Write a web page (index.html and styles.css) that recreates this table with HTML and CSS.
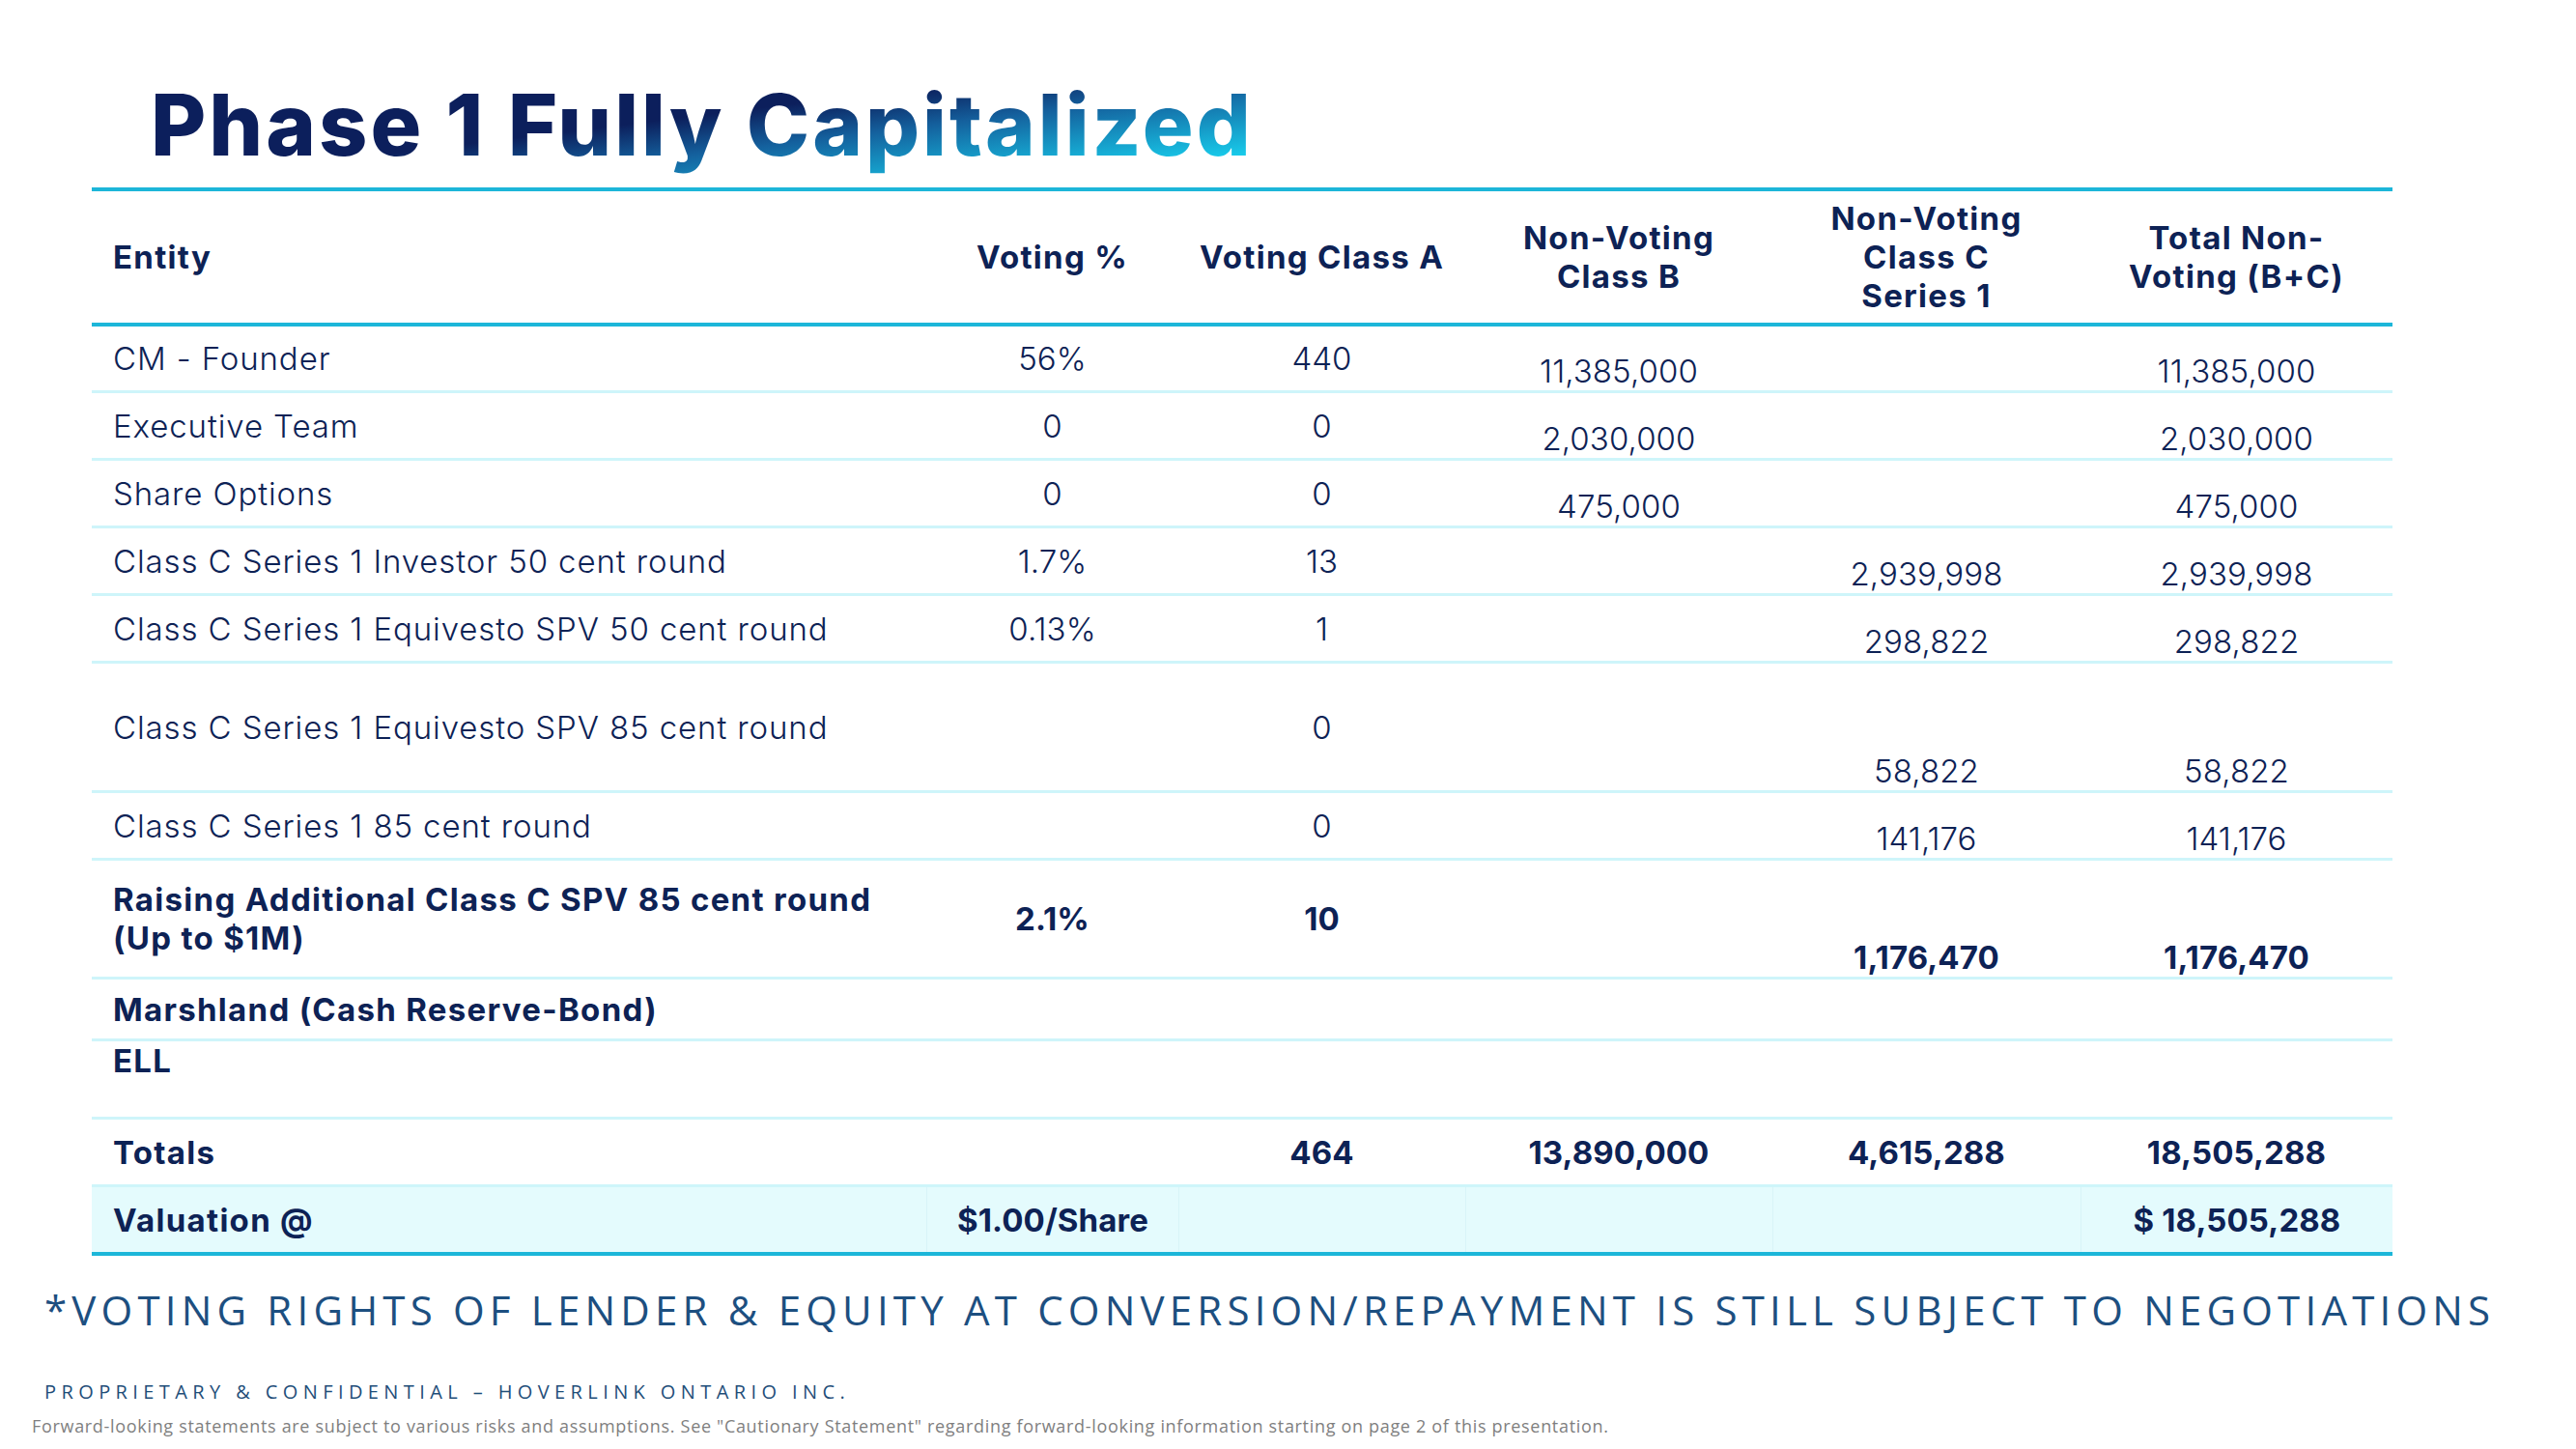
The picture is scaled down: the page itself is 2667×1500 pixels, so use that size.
FILE: index.html
```html
<!DOCTYPE html>
<html lang="en">
<head>
<meta charset="utf-8">
<title>Phase 1 Fully Capitalized</title>
<link rel="stylesheet" href="styles.css">
</head>
<body>
<div class="slide">
  <header class="top">
    <h1 class="title">Phase 1 Fully Capitalized</h1>
  </header>

  <div class="cap">
    <div class="row head">
      <div class="c ent">Entity</div>
      <div class="c">Voting %</div>
      <div class="c">Voting Class A</div>
      <div class="c">Non-Voting<br>Class B</div>
      <div class="c">Non-Voting<br>Class C<br>Series 1</div>
      <div class="c">Total Non-<br>Voting (B+C)</div>
    </div>

    <div class="row r69">
      <div class="c ent">CM - Founder</div>
      <div class="c n">56%</div>
      <div class="c n">440</div>
      <div class="c n b">11,385,000</div>
      <div class="c n b"></div>
      <div class="c n b">11,385,000</div>
    </div>
    <div class="row r70">
      <div class="c ent">Executive Team</div>
      <div class="c n">0</div>
      <div class="c n">0</div>
      <div class="c n b">2,030,000</div>
      <div class="c n b"></div>
      <div class="c n b">2,030,000</div>
    </div>
    <div class="row r70">
      <div class="c ent">Share Options</div>
      <div class="c n">0</div>
      <div class="c n">0</div>
      <div class="c n b">475,000</div>
      <div class="c n b"></div>
      <div class="c n b">475,000</div>
    </div>
    <div class="row r70">
      <div class="c ent">Class C Series 1 Investor 50 cent round</div>
      <div class="c n">1.7%</div>
      <div class="c n">13</div>
      <div class="c n b"></div>
      <div class="c n b">2,939,998</div>
      <div class="c n b">2,939,998</div>
    </div>
    <div class="row r70">
      <div class="c ent">Class C Series 1 Equivesto SPV 50 cent round</div>
      <div class="c n">0.13%</div>
      <div class="c n">1</div>
      <div class="c n b"></div>
      <div class="c n b">298,822</div>
      <div class="c n b">298,822</div>
    </div>
    <div class="row r134">
      <div class="c ent">Class C Series 1 Equivesto SPV 85 cent round</div>
      <div class="c n"></div>
      <div class="c n">0</div>
      <div class="c n b"></div>
      <div class="c n b">58,822</div>
      <div class="c n b">58,822</div>
    </div>
    <div class="row r70">
      <div class="c ent">Class C Series 1 85 cent round</div>
      <div class="c n"></div>
      <div class="c n">0</div>
      <div class="c n b"></div>
      <div class="c n b">141,176</div>
      <div class="c n b">141,176</div>
    </div>
    <div class="row r123 bold">
      <div class="c ent">Raising Additional Class C SPV 85 cent round<br>(Up to $1M)</div>
      <div class="c n">2.1%</div>
      <div class="c n">10</div>
      <div class="c n b"></div>
      <div class="c n b">1,176,470</div>
      <div class="c n b">1,176,470</div>
    </div>
    <div class="row r64 bold">
      <div class="c ent">Marshland (Cash Reserve-Bond)</div>
      <div class="c"></div>
      <div class="c"></div>
      <div class="c"></div>
      <div class="c"></div>
      <div class="c"></div>
    </div>
    <div class="row r81 bold">
      <div class="c ent t">ELL</div>
      <div class="c"></div>
      <div class="c"></div>
      <div class="c"></div>
      <div class="c"></div>
      <div class="c"></div>
    </div>
    <div class="row r70 bold">
      <div class="c ent">Totals</div>
      <div class="c n"></div>
      <div class="c n">464</div>
      <div class="c n">13,890,000</div>
      <div class="c n">4,615,288</div>
      <div class="c n">18,505,288</div>
    </div>
    <div class="row val bold">
      <div class="c ent">Valuation @</div>
      <div class="c n">$1.00/Share</div>
      <div class="c n"></div>
      <div class="c n"></div>
      <div class="c n"></div>
      <div class="c n">$ 18,505,288</div>
    </div>
  </div>

  <p class="banner">*VOTING RIGHTS OF LENDER &amp; EQUITY AT CONVERSION/REPAYMENT IS STILL SUBJECT TO NEGOTIATIONS</p>
  <p class="prop">PROPRIETARY &amp; CONFIDENTIAL – HOVERLINK ONTARIO INC.</p>
  <p class="fwd">Forward-looking statements are subject to various risks and assumptions. See "Cautionary Statement" regarding forward-looking information starting on page 2 of this presentation.</p>
</div>
</body>
</html>
```

FILE: styles.css
```css
html, body {
  margin: 0;
  padding: 0;
  background: #ffffff;
}

.slide {
  width: 2667px;
  height: 1500px;
  background: #ffffff;
  overflow: hidden;
  font-family: Inter, "Open Sans", sans-serif;
  color: #0d2255;
}

.top {
  height: 194px;
  box-sizing: border-box;
  padding: 76px 0 0 156px;
}

.title {
  margin: 0;
  width: fit-content;
  font-family: Inter, sans-serif;
  font-weight: 800;
  font-size: 88px;
  line-height: 1.21;
  letter-spacing: 3px;
  color: transparent;
  background: linear-gradient(173deg, #0c1f5c 0%, #0c1f5c 46%, #14609d 62%, #18dbf6 95%);
  -webkit-background-clip: text;
  background-clip: text;
}

.cap {
  margin-left: 95px;
  width: 2382px;
}

.row {
  display: grid;
  grid-template-columns: 864px 261px 297px 318px 319px 323px;
  box-sizing: border-box;
  border-bottom: 3px solid #cef5fa;
  font-size: 33px;
  font-weight: 300;
  line-height: 40px;
  letter-spacing: 0.9px;
}

.row.head {
  height: 144px;
  border-top: 4px solid #1cb6d9;
  border-bottom: 4px solid #1cb6d9;
  font-weight: 700;
  letter-spacing: 1.3px;
}

.r69 { height: 69px; }
.r70 { height: 70px; }
.r134 { height: 134px; }
.r123 { height: 123px; }
.r64 { height: 64px; }
.r81 { height: 81px; }

.row.bold {
  font-weight: 700;
  letter-spacing: 1.3px;
}

.row.val {
  height: 71px;
  background: #e4fbfd;
  border-bottom: 4px solid #1cb6d9;
}

.row.val .c + .c {
  border-left: 1px solid #d8f4f8;
}

.c {
  display: flex;
  align-items: center;
  justify-content: center;
  text-align: center;
  white-space: nowrap;
}

.c.n {
  letter-spacing: 0.1px;
}

.c.ent {
  justify-content: flex-start;
  text-align: left;
  padding-left: 22px;
}

.c.b {
  align-items: flex-end;
}

.c.t {
  align-items: flex-start;
}

.banner {
  margin: 27px 0 0 46px;
  font-family: "Open Sans", sans-serif;
  font-size: 42px;
  font-weight: 500;
  line-height: normal;
  letter-spacing: 5.2px;
  color: #1d4f80;
  white-space: nowrap;
}

.prop {
  margin: 43px 0 0 46px;
  font-family: "Open Sans", sans-serif;
  font-size: 20px;
  line-height: normal;
  letter-spacing: 5.4px;
  color: #1f4e79;
  white-space: nowrap;
}

.fwd {
  margin: 10px 0 0 33px;
  font-family: "Open Sans", sans-serif;
  font-size: 18px;
  line-height: normal;
  letter-spacing: 0.68px;
  color: #7f7f7f;
  white-space: nowrap;
}
```
